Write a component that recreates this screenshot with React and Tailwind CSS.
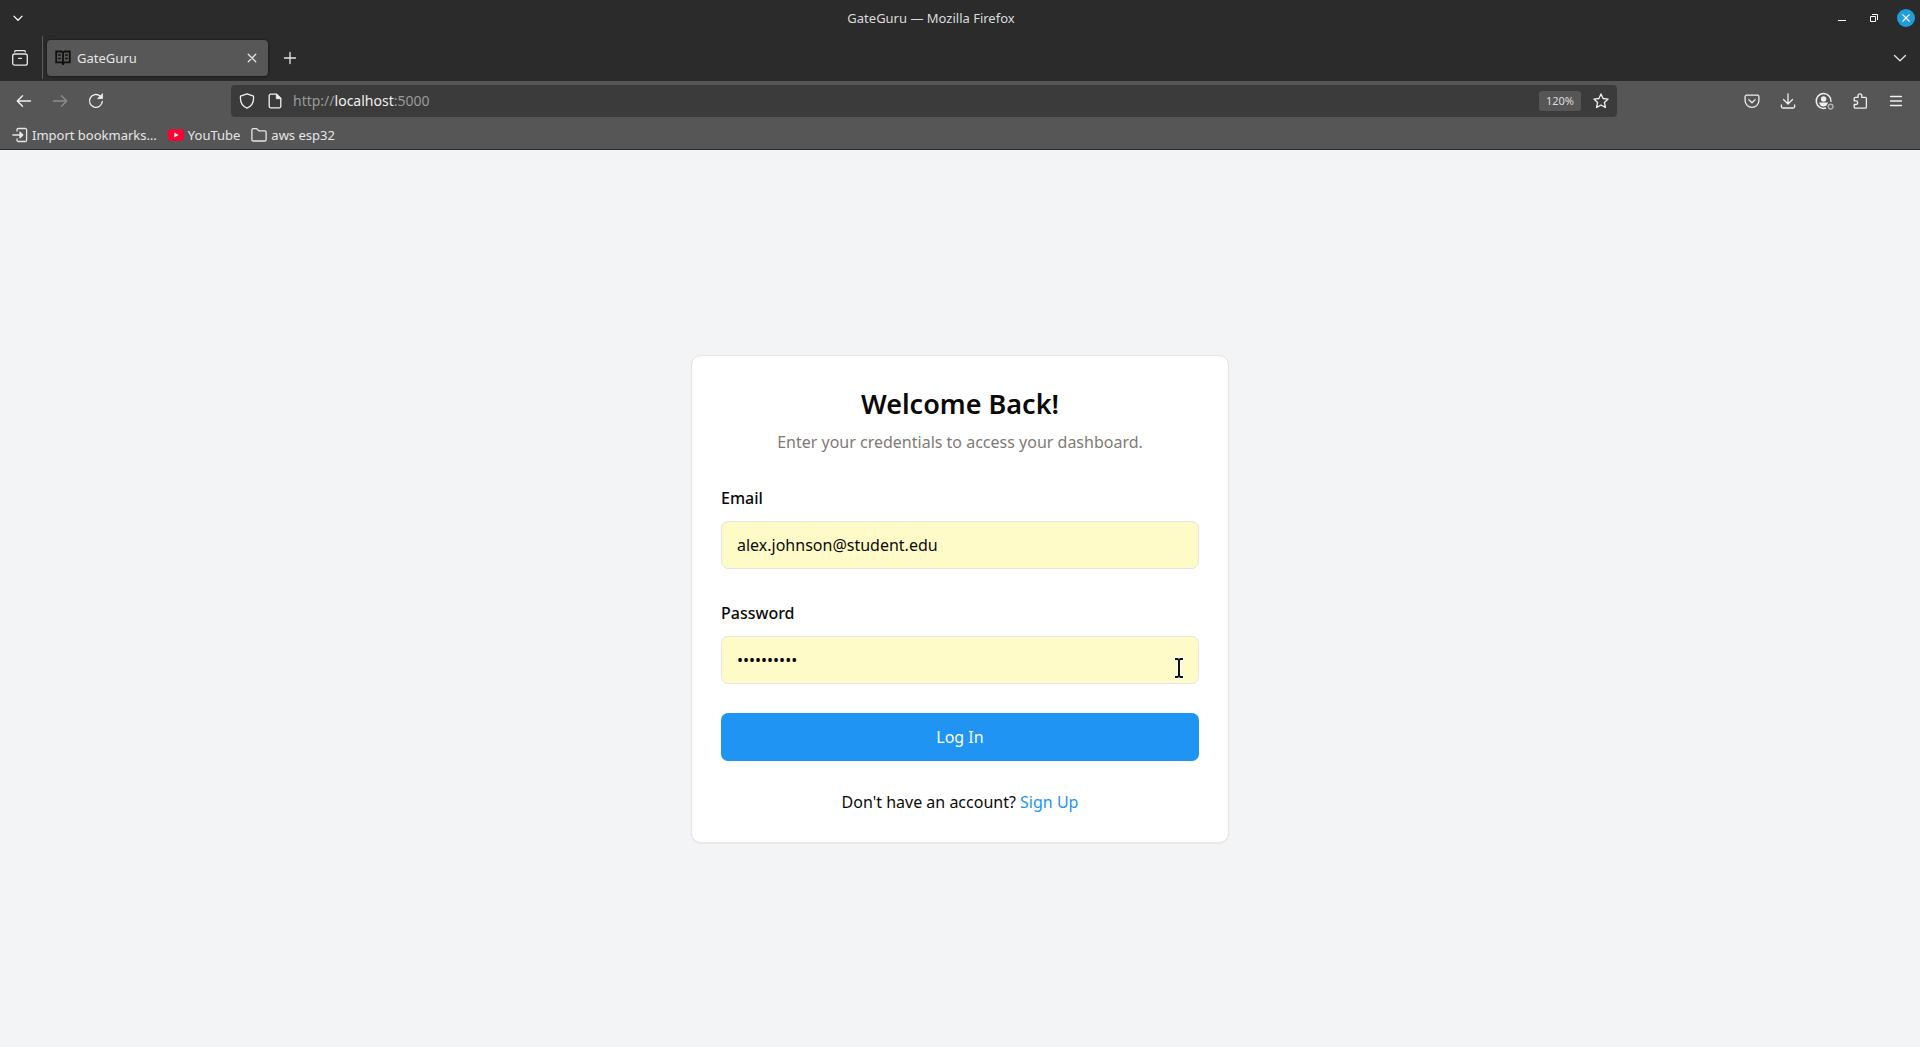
import React from "react";

function Icon({ size = 16, className = "", children, ...rest }) {
  return (
    <svg
      width={size}
      height={size}
      viewBox="0 0 16 16"
      fill="none"
      stroke="currentColor"
      strokeWidth="1.3"
      strokeLinecap="round"
      strokeLinejoin="round"
      aria-hidden="true"
      className={`shrink-0 ${className}`}
      {...rest}
    >
      {children}
    </svg>
  );
}

function ToolButton({ label, className = "", children, ...rest }) {
  return (
    <button
      type="button"
      aria-label={label}
      className={`flex h-9 w-9 shrink-0 items-center justify-center ${className}`}
      {...rest}
    >
      {children}
    </button>
  );
}

function TitleBar() {
  return (
    <div className="flex h-9 items-center text-white">
      <button type="button" aria-label="Window menu" className="flex h-9 w-9 items-center justify-center">
        <Icon size={12} strokeWidth="1.6">
          <path d="M2.5 5.5 8 11l5.5-5.5" />
        </Icon>
      </button>
      <div className="flex-1 text-center text-[13px] leading-5 text-[#dcdcdc]">GateGuru — Mozilla Firefox</div>
      <div className="flex items-center">
        <button type="button" aria-label="Minimize" className="flex h-8 w-8 items-center justify-center">
          <Icon>
            <path d="M4 10.5h8" strokeWidth="1" strokeLinecap="butt" />
          </Icon>
        </button>
        <button type="button" aria-label="Restore" className="flex h-8 w-8 items-center justify-center">
          <Icon strokeWidth="1" strokeLinejoin="miter" strokeLinecap="butt">
            <path d="M4.5 6.500h5v5h-5zM6 4.500h5.500V10" />
          </Icon>
        </button>
        <button type="button" aria-label="Close window" className="ml-0.5 flex h-8 w-7 items-center justify-center">
          <svg width="18" height="18" viewBox="0 0 18 18" aria-hidden="true">
            <circle cx="9" cy="9" r="9" fill="#1f9ede" />
            <path d="m5.500 5.500 7 7m0-7-7 7" stroke="#fff" strokeWidth="1.2" />
          </svg>
        </button>
      </div>
    </div>
  );
}

function TabStrip() {
  return (
    <div className="flex h-[45px] items-center pb-0.5 text-[#e6e6e6]">
      <ToolButton label="Recent browsing" className="ml-0.5">
        <Icon>
          <path d="M2.600 1.800Q2.800.6 4 .6h8q1.200 0 1.400 1.200" />
          <rect x=".7" y="4" width="14.600" height="11.200" rx="2" />
          <path d="M6.500 8.300h3" />
        </Icon>
      </ToolButton>
      <div className="ml-1 h-[43px] w-px bg-[#5b5b5b]" />
      <div className="ml-1 flex h-9 w-[221px] items-center rounded bg-[#575757] pl-2 pr-1 shadow-[0_0_3px_rgba(0,0,0,0.6)]">
        <svg width="16" height="16" viewBox="0 0 16 16" fill="none" stroke="#101010" aria-hidden="true">
          <path d="M1.200 1.500h5.300L8 2.500l1.500-1h5.300v10.800H9.500L8 13.500l-1.500-1.200H1.200zM8 2.500v12.500" strokeWidth="1.8" />
          <path d="M3.200 5h2.600M3.200 8.500h2.600M10.200 5h2.600M10.200 8.500h2.600" strokeWidth="1.4" />
        </svg>
        <span className="ml-1.5 flex-1 text-[13px] leading-5">GateGuru</span>
        <button type="button" aria-label="Close tab" className="flex h-6 w-6 items-center justify-center">
          <Icon size={12} strokeWidth="1.7">
            <path d="m3 3 10 10M13 3 3 13" />
          </Icon>
        </button>
      </div>
      <ToolButton label="New tab" className="ml-1">
        <Icon>
          <path d="M8 2.500v11M2.500 8h11" />
        </Icon>
      </ToolButton>
      <ToolButton label="List all tabs" className="ml-auto mr-0.5">
        <Icon>
          <path d="m2.500 5.500 5.500 5.300 5.500-5.300" />
        </Icon>
      </ToolButton>
    </div>
  );
}

function NavBar() {
  return (
    <div className="flex h-10 items-center px-1.5 text-[#f0f0f0]">
      <ToolButton label="Back">
        <Icon strokeWidth="1.4">
          <path d="M14.500 8h-13M6.500 2.800 1.300 8l5.200 5.200" />
        </Icon>
      </ToolButton>
      <ToolButton label="Forward" disabled className="text-[#8d8d8d]">
        <Icon strokeWidth="1.4">
          <path d="M1.500 8h13M9.500 2.800 14.700 8l-5.200 5.200" />
        </Icon>
      </ToolButton>
      <ToolButton label="Reload">
        <Icon>
          <path d="M14.300 8.500A6.400 6.400 0 1 1 12 3" />
          <path d="M14.500 1v4.500H10z" fill="currentColor" strokeWidth=".8" />
        </Icon>
      </ToolButton>

      <div className="mx-[117px] flex h-8 min-w-0 flex-1 items-center rounded bg-[#3b3b3b] pl-2 pr-1">
        <button type="button" aria-label="Tracking protection" className="flex h-7 w-4 items-center justify-center">
          <Icon>
            <path d="M8 .8 14.500 3.200c.5 5-1.200 9.600-6.500 12C2.700 12.800 1 8.200 1.500 3.200z" />
          </Icon>
        </button>
        <button type="button" aria-label="Site information" className="ml-3 flex h-7 w-4 items-center justify-center">
          <Icon>
            <path d="M9.500 1.200H3.700A1.500 1.500 0 0 0 2.200 2.700v10.600a1.500 1.500 0 0 0 1.500 1.500h8.600a1.500 1.500 0 0 0 1.500-1.500V5.500z" />
            <path d="M9.300 1.300v4.400h4.400z" fill="currentColor" strokeWidth=".8" />
          </Icon>
        </button>
        <div className="ml-2.5 flex-1 text-sm text-[#9a9a9a]">
          http://<span className="text-[#f0f0f0]">localhost</span>:5000
        </div>
        <button
          type="button"
          className="mr-2 flex h-5 w-[42px] items-center justify-center rounded-[3px] bg-[#565656] text-[11px] text-[#dcdcdc]"
        >
          120%
        </button>
        <button type="button" aria-label="Bookmark this page" className="flex h-7 w-6 items-center justify-center">
          <Icon>
            <path d="m8 .9 2.100 4.600 5 .6-3.700 3.400 1 5L8 12l-4.400 2.500 1-5L.9 6.100l5-.6z" />
          </Icon>
        </button>
      </div>

      <ToolButton label="Save to Pocket">
        <Icon>
          <path d="M2.600 2.200h10.800a1.500 1.500 0 0 1 1.500 1.500V7.500a6.900 6.900 0 0 1-13.800 0V3.700a1.500 1.500 0 0 1 1.500-1.500z" />
          <path d="M4.800 6.600 8 9.700l3.200-3.100" />
        </Icon>
      </ToolButton>
      <ToolButton label="Downloads">
        <Icon>
          <path d="M8 .8v10M3.500 6.500 8 11l4.500-4.500M1.400 12v1.500a1.500 1.500 0 0 0 1.500 1.500h10.200a1.500 1.500 0 0 0 1.500-1.500V12" />
        </Icon>
      </ToolButton>
      <ToolButton label="Account">
        <svg width="20" height="18" viewBox="0 0 20 18" fill="none" aria-hidden="true">
          <path d="M12 16A7.400 7.400 0 1 1 17 9.800" stroke="currentColor" strokeWidth="1.5" />
          <circle cx="9.600" cy="7" r="2.700" fill="currentColor" />
          <path d="M5 10.500h9.200l-2 3.200q-2.800 1.600-5.600 0z" fill="currentColor" />
          <circle cx="16.600" cy="14.600" r="2.400" stroke="#b0b0b0" strokeWidth="1.4" />
        </svg>
      </ToolButton>
      <ToolButton label="Extensions">
        <Icon>
          <path d="M2.200 5.600A1.200 1.200 0 0 1 3.400 4.400H6V2.800a1.900 1.900 0 0 1 3.800 0v1.600h3.400a1.200 1.200 0 0 1 1.200 1.200v8.400a1.200 1.200 0 0 1-1.200 1.200H3.400a1.200 1.200 0 0 1-1.200-1.200v-2.500h1.700a1.800 1.800 0 0 0 0-3.600H2.200z" />
        </Icon>
      </ToolButton>
      <ToolButton label="Open application menu">
        <Icon>
          <path d="M2.500 3.500h11M2.500 8h11M2.500 12.500h11" />
        </Icon>
      </ToolButton>
    </div>
  );
}

function BookmarksBar() {
  return (
    <nav
      aria-label="Bookmarks"
      className="flex h-7 items-center gap-[11px] px-3 text-[13px] leading-5 text-[#e6e6e6]"
    >
      <a href="#import" className="flex items-center gap-1">
        <Icon>
          <path d="M5 4V2.800a1.300 1.300 0 0 1 1.300-1.300h7A1.300 1.300 0 0 1 14.600 2.800v10.400a1.300 1.300 0 0 1-1.300 1.300h-7A1.300 1.300 0 0 1 5 13.200V12M.8 8h9" />
          <path d="M8 5.200 10.800 8 8 10.800z" fill="currentColor" />
        </Icon>
        Import bookmarks…
      </a>
      <a href="#youtube" className="flex items-center gap-1">
        <svg width="16" height="16" viewBox="0 0 16 16" aria-hidden="true">
          <rect y="2.300" width="16" height="11.400" rx="3" fill="#ff0033" />
          <path d="M6.400 5.600v4.800L10.500 8z" fill="#fff" />
        </svg>
        YouTube
      </a>
      <a href="#aws-esp32" className="flex items-center gap-1">
        <Icon>
          <path d="M.9 3a1.300 1.300 0 0 1 1.300-1.300H5.700L7.800 3.800h6a1.300 1.300 0 0 1 1.300 1.300v7.600a1.300 1.300 0 0 1-1.300 1.300H2.200A1.300 1.300 0 0 1 .9 12.700z" />
        </Icon>
        aws esp32
      </a>
    </nav>
  );
}

function TextCursor() {
  return (
    <svg
      width="12"
      height="24"
      viewBox="0 0 12 24"
      fill="none"
      aria-hidden="true"
      className="pointer-events-none absolute right-3 top-5 mr-0.5"
    >
      <path d="M1 3h3.500L6 4l1.500-1H11M6 4v16M1 21h3.500L6 20l1.500 1H11" stroke="#fff" strokeWidth="4" />
      <path d="M2 3h2.500L6 4l1.500-1H10M6 4v16M2 21h2.500L6 20l1.500 1H10" stroke="#111" strokeWidth="2" />
    </svg>
  );
}

const inputStyle =
  "h-12 w-full rounded-[7px] border border-[#e5e5e5] bg-[#fffbc8] px-[15px] text-base text-[#0c0a09] outline-none";

function LoginCard() {
  return (
    <section className="w-full max-w-[538px] rounded-[10px] border border-[#e7e5e4] bg-white px-[29px] py-7 text-[#0c0a09] shadow-xs">
      <h1 className="text-center text-[27px] font-semibold leading-10">Welcome Back!</h1>
      <p className="mt-1.5 text-center text-base text-[#7f7a76]">Enter your credentials to access your dashboard.</p>
      <form className="mt-8" onSubmit={(e) => e.preventDefault()}>
        <label htmlFor="email" className="block text-base font-medium">
          Email
        </label>
        <input id="email" type="email" defaultValue="alex.johnson@student.edu" className={`mt-[11px] ${inputStyle}`} />
        <label htmlFor="password" className="mt-8 block text-base font-medium">
          Password
        </label>
        <div className="relative mt-[11px]">
          <input id="password" type="password" defaultValue="gateguru10" className={inputStyle} />
          <TextCursor />
        </div>
        <button type="submit" className="mt-[29px] h-12 w-full rounded-[7px] bg-[#2094f3] text-base text-[#f8fafc]">
          Log In
        </button>
      </form>
      <p className="mt-[29px] text-center text-base">
        Don't have an account?{" "}
        <a href="#signup" className="text-[#2094f3]">
          Sign Up
        </a>
      </p>
    </section>
  );
}

export default function App() {
  return (
    <div className="flex min-h-screen flex-col bg-[#f2f4f6] font-['Noto_Sans',sans-serif]">
      <header>
        <div className="bg-[#2b2b2b]">
          <TitleBar />
          <TabStrip />
        </div>
        <div className="border-b border-[#2b2b2b] bg-[#565656]">
          <NavBar />
          <BookmarksBar />
        </div>
      </header>
      <main className="flex flex-1 items-center justify-center p-4">
        <LoginCard />
      </main>
    </div>
  );
}
